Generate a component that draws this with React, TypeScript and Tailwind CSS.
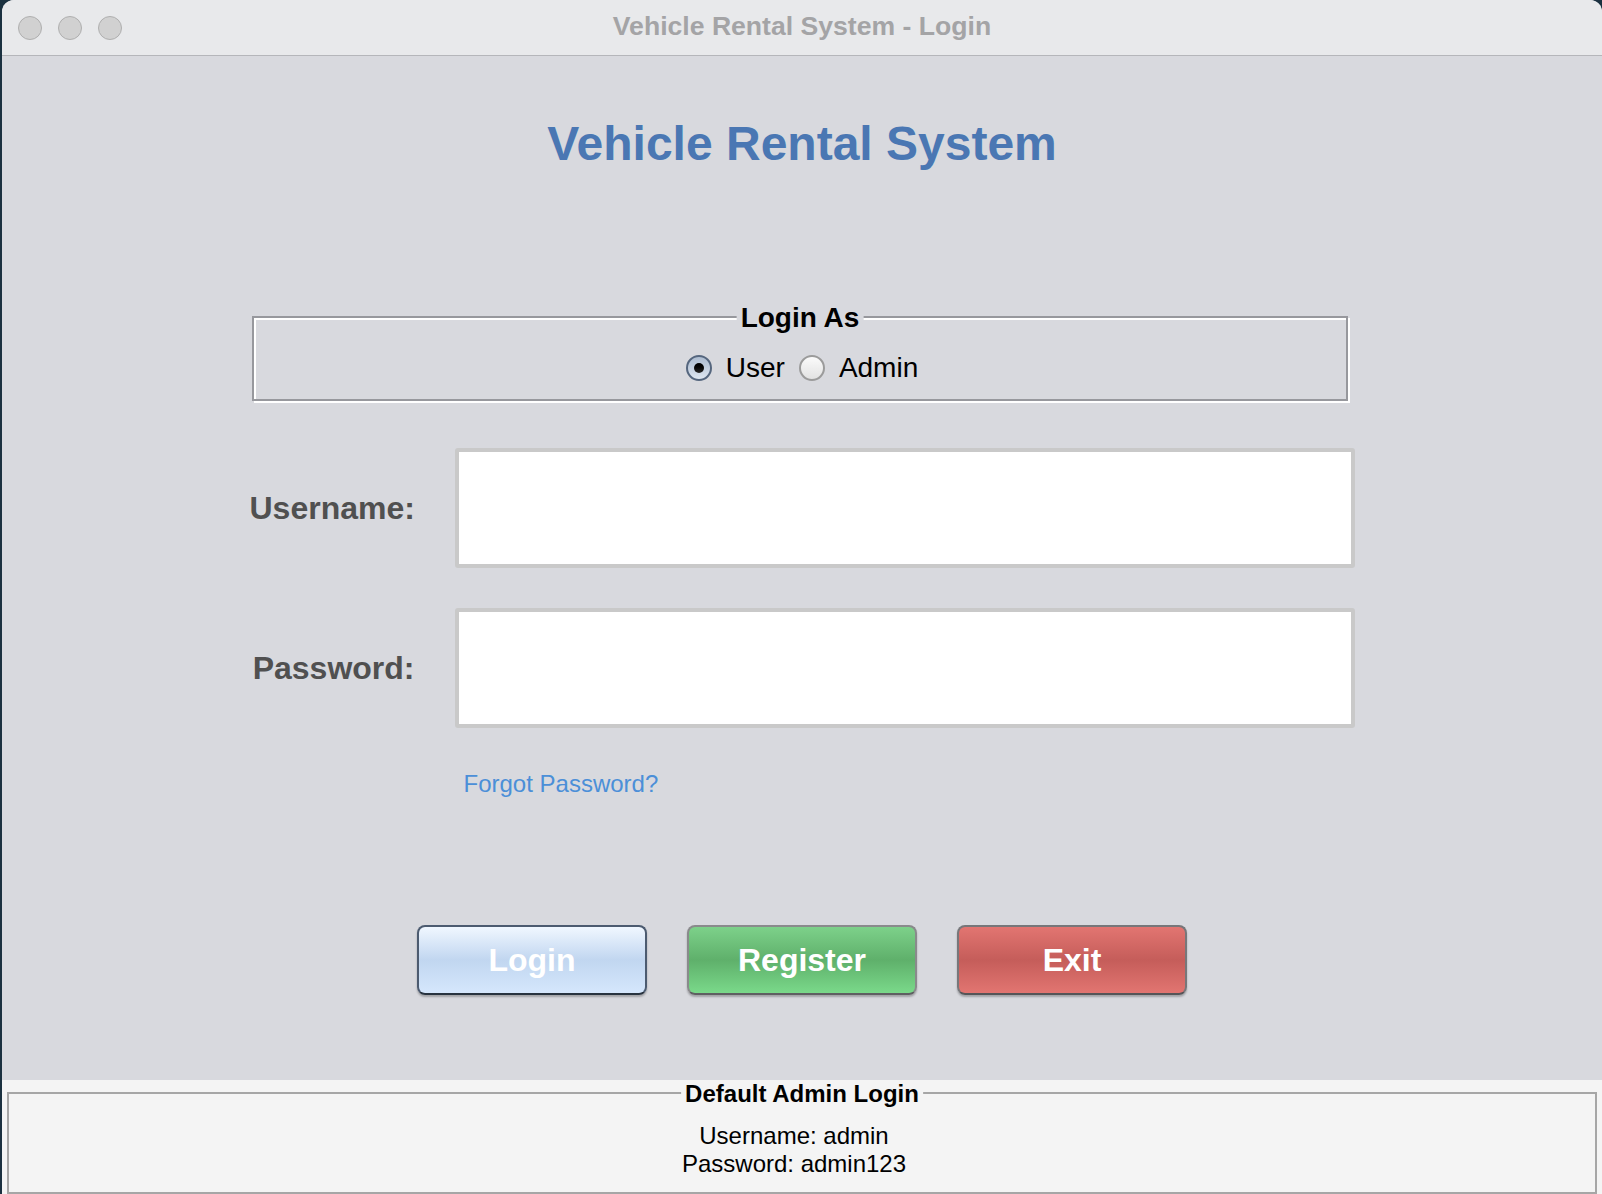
import { useState } from 'react';

const font = { fontFamily: '"Liberation Sans", Arial, sans-serif' };

function Radio({ checked, label, onClick }: { checked: boolean; label: string; onClick: () => void }) {
  return (
    <button type="button" onClick={onClick} className="flex items-center gap-[14px] cursor-default">
      {checked ? (
        <span className="flex h-[26px] w-[26px] items-center justify-center rounded-full border-2 border-[#55667e] bg-gradient-to-b from-[#aebdd1] via-[#c3cfdf] to-[#dfe7f1]">
          <span className="h-[10px] w-[10px] rounded-full bg-gradient-to-b from-[#000] to-[#2a2a2a]" />
        </span>
      ) : (
        <span className="h-[26px] w-[26px] rounded-full border-2 border-[#9b9b9b] bg-gradient-to-b from-[#fbfbfb] to-[#e2e2e2]" />
      )}
      <span className="text-[28px] leading-[32px] text-black">{label}</span>
    </button>
  );
}

export default function App() {
  const [role, setRole] = useState<'user' | 'admin'>('user');
  const [username, setUsername] = useState('');
  const [password, setPassword] = useState('');

  return (
    <div className="h-[1194px] w-[1602px] overflow-hidden bg-[#1b3140]" style={font}>
      <div className="ml-[2px] flex h-full flex-col overflow-hidden rounded-t-[12px] bg-[#d8d9de]">
        {/* title bar */}
        <div className="grid h-[56px] shrink-0 grid-cols-[1fr_auto_1fr] items-center border-b border-[#b5b6ba] bg-[#e8e9eb]">
          <div className="flex gap-[16px] pl-[16px]">
            <span className="h-[24px] w-[24px] rounded-full border border-[#afafaf] bg-[#d1d1d1]" />
            <span className="h-[24px] w-[24px] rounded-full border border-[#afafaf] bg-[#d1d1d1]" />
            <span className="h-[24px] w-[24px] rounded-full border border-[#afafaf] bg-[#d1d1d1]" />
          </div>
          <div className="pb-[2px] text-[26.6px] font-bold text-[#a4a4a6]">Vehicle Rental System - Login</div>
          <div />
        </div>

        {/* main content */}
        <div className="flex flex-1 flex-col items-center">
          <h1 className="mt-[64px] h-[48px] text-[48px] leading-[48px] font-bold text-[#4a77b3]">Vehicle Rental System</h1>

          <div className="relative mt-[148px] h-[85px] w-[1096px] -translate-x-[2px] border-2 border-[#97989d] shadow-[inset_2px_2px_0_#fff,2px_2px_0_#fff]">
            <span className="absolute left-1/2 top-0 -translate-x-1/2 -translate-y-1/2 bg-[#d8d9de] px-[4px] text-[28px] leading-[32px] font-bold text-black">
              Login As
            </span>
            <div className="flex justify-center gap-[14px] pt-[34px] pl-[4px]">
              <Radio checked={role === 'user'} label="User" onClick={() => setRole('user')} />
              <Radio checked={role === 'admin'} label="Admin" onClick={() => setRole('admin')} />
            </div>
          </div>

          <div className="mt-[47px] flex w-[1105px] flex-col gap-[40px]">
            <div className="flex items-center gap-[40px]">
              <label className="w-[165px] text-right text-[32px] font-bold text-[#505050]">Username:</label>
              <input
                value={username}
                onChange={(e) => setUsername(e.target.value)}
                className="h-[120px] w-[900px] rounded-[3px] border-4 border-[#c9c9c9] bg-white px-3 text-[28px] outline-none"
              />
            </div>
            <div className="flex items-center gap-[40px]">
              <label className="w-[165px] text-right text-[32px] font-bold text-[#505050]">Password:</label>
              <input
                type="password"
                value={password}
                onChange={(e) => setPassword(e.target.value)}
                className="h-[120px] w-[900px] rounded-[3px] border-4 border-[#c9c9c9] bg-white px-3 text-[28px] outline-none"
              />
            </div>
          </div>

          <div className="mt-[42px] w-[1105px] pl-[214px]">
            <a className="text-[24px] leading-[28px] text-[#4b8fd8] cursor-pointer">Forgot Password?</a>
          </div>

          <div className="mt-[126px] flex gap-[40px]">
            <button className="h-[70px] w-[230px] rounded-[8px] border-2 border-[#4c5b70] border-b-[#28333f] bg-gradient-to-b from-[#f0f7ff] via-[#c1d6f0] to-[#d5e7fc] text-[32px] font-bold text-white shadow-[0_2px_2px_rgba(0,0,0,0.25)]">
              Login
            </button>
            <button className="h-[70px] w-[230px] rounded-[8px] border-2 border-[#8a8a8c] border-b-[#5f5f62] bg-gradient-to-b from-[#7dd18a] via-[#5fb06b] to-[#7ad98a] text-[32px] font-bold text-white shadow-[0_2px_2px_rgba(0,0,0,0.25)]">
              Register
            </button>
            <button className="h-[70px] w-[230px] rounded-[8px] border-2 border-[#77777a] border-b-[#555558] bg-gradient-to-b from-[#e27571] via-[#c55d5a] to-[#e27571] text-[32px] font-bold text-white shadow-[0_2px_2px_rgba(0,0,0,0.25)]">
              Exit
            </button>
          </div>
        </div>

        {/* bottom info panel */}
        <div className="h-[114px] shrink-0 bg-[#f4f4f4] pt-[12px] pl-[5px] pr-[5px]">
          <div className="relative h-[102px] border-2 border-[#a6a6a6] pt-[28px] text-center">
            <span className="absolute left-1/2 top-0 -translate-x-1/2 -translate-y-1/2 bg-[#f4f4f4] px-[4px] text-[24px] leading-[28px] font-bold text-black">
              Default Admin Login
            </span>
            <div className="-translate-x-[8px] text-[24px] leading-[28px] text-black">Username: admin</div>
            <div className="-translate-x-[8px] text-[24px] leading-[28px] text-black">Password: admin123</div>
          </div>
        </div>
      </div>
    </div>
  );
}
